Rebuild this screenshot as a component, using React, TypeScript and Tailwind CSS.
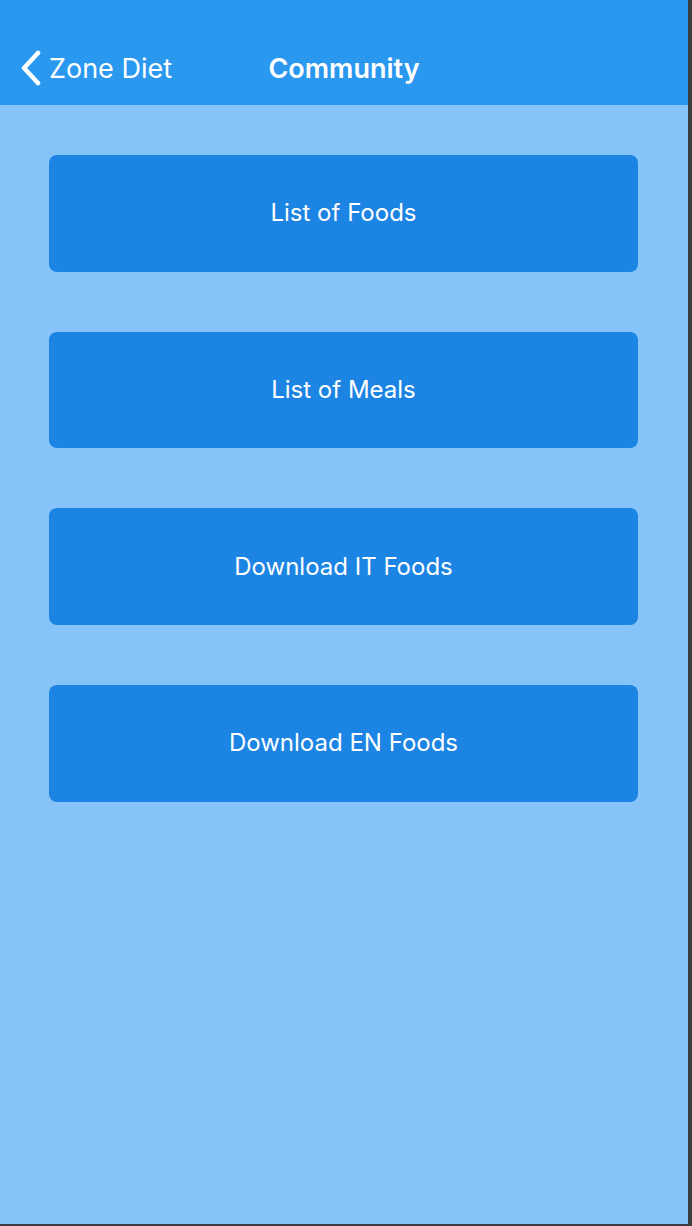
import React from "react";

const items = ["List of Foods", "List of Meals", "Download IT Foods", "Download EN Foods"];

export default function App() {
  return (
    <div className="w-[692px] h-[1226px] bg-[#3a3d40] flex flex-col" style={{ fontFamily: "Inter, 'Noto Sans', sans-serif" }}>
      <div className="w-[688px] h-[1224px] bg-[#85c3f8] flex flex-col">
        <div className="h-[105px] bg-[#2b98f0] relative flex items-end pb-[21px]">
          <div className="absolute left-[20px] top-[50px] flex items-center">
            <svg width="22" height="36" viewBox="0 0 22 36" fill="none">
              <path d="M18 3 L4 18 L18 33" stroke="white" strokeWidth="4.5" strokeLinecap="round" strokeLinejoin="round" />
            </svg>
            <span className="ml-[7px] text-white text-[27px] leading-none">Zone Diet</span>
          </div>
          <div className="w-full text-center text-white text-[27px] font-semibold leading-none mb-[2px]">Community</div>
        </div>
        <div className="flex flex-col gap-[60px] pt-[50px] pl-[49px] pr-[50px]">
          {items.map((t) => (
            <div key={t} className="h-[116.7px] rounded-[8px] bg-[#1c84e3] flex items-center justify-center text-white text-[24px]">
              {t}
            </div>
          ))}
        </div>
      </div>
    </div>
  );
}
